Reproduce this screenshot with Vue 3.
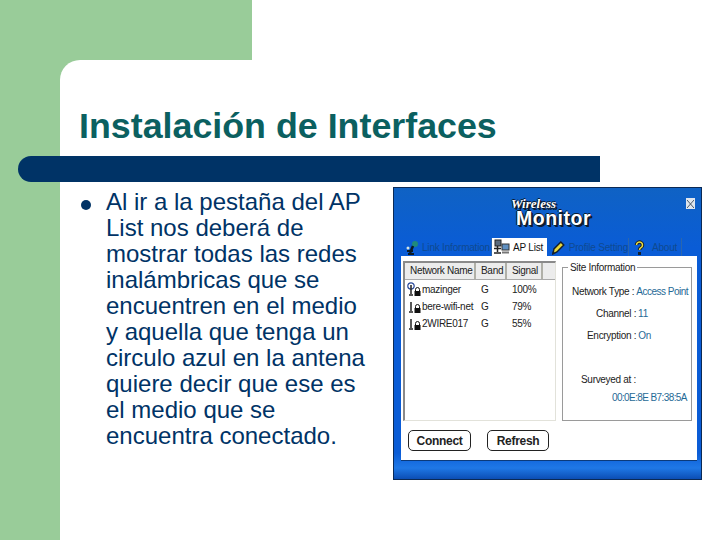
<script setup>
const lines = [
  'Al ir a la pestaña del AP',
  'List nos deberá de',
  'mostrar todas las redes',
  'inalámbricas que se',
  'encuentren en el medio',
  'y aquella que tenga un',
  'circulo azul en la antena',
  'quiere decir que ese es',
  'el medio que se',
  'encuentra conectado.'
]

const networks = [
  { name: 'mazinger', band: 'G', signal: '100%', connected: true },
  { name: 'bere-wifi-net', band: 'G', signal: '79%', connected: false },
  { name: '2WIRE017', band: 'G', signal: '55%', connected: false }
]
</script>

<template>
  <div class="slide">
    <div class="top-band"></div>
    <div class="main">
      <div class="content">
        <h1 class="title">Instalación de Interfaces</h1>
        <div class="rule"></div>
        <div class="body">
          <div class="bullet"></div>
          <p class="text">
            <span v-for="line in lines" :key="line" class="line">{{ line }}</span>
          </p>
          <div class="window">
            <div class="logo-row">
              <div class="logo">
                <span class="logo-small">Wireless</span>
                <span class="logo-big">Monitor</span>
              </div>
              <div class="close">
                <svg width="7" height="8" viewBox="0 0 7 8"><path d="M0 0l7 8M7 0L0 8" stroke="#4a5a6a" stroke-width="1" fill="none" /></svg>
              </div>
            </div>
            <div class="tabs">
              <div class="tab tab-link">
                <svg width="14" height="16" viewBox="0 0 14 16"><circle cx="10" cy="5" r="3" fill="#1f8a7c" /><path d="M8 7L5 14" stroke="#0c1a24" stroke-width="2.500" fill="none" /><path d="M2 12h6M3 15h6" stroke="#0c1a24" stroke-width="2" fill="none" /><circle cx="3" cy="9" r="1.500" fill="#d8e6e0" /></svg>
                <span>Link Information</span>
              </div>
              <div class="tab tab-active">
                <svg width="16" height="16" viewBox="0 0 16 16"><rect x="1" y="1" width="6" height="6" fill="#5a6a7c" stroke="#222" stroke-width="1" /><rect x="8" y="5" width="7" height="6" fill="#5f8fc0" stroke="#333" stroke-width="1" /><path d="M0 9.500h7M3.500 7v6M0 14h7" stroke="#222" stroke-width="1.500" fill="none" /><path d="M8 13.500h7" stroke="#777" stroke-width="2" /></svg>
                <span>AP List</span>
              </div>
              <div class="tab tab-profile">
                <svg width="15" height="16" viewBox="0 0 15 16"><path d="M2 15l1-5 7-7 3 3-7 7z" fill="#e8d83a" stroke="#15202c" stroke-width="1.500" /><path d="M1 15l3-1-2-2z" fill="#15202c" /></svg>
                <span>Profile Setting</span>
              </div>
              <div class="tab tab-about">
                <svg width="11" height="15" viewBox="0 0 11 15"><path d="M2.500 5a3 3 0 1 1 4.500 2.600C6 8.200 5.500 9 5.500 10" stroke="#15202c" stroke-width="3.500" fill="none" /><path d="M2.500 5a3 3 0 1 1 4.500 2.600C6 8.200 5.500 9 5.500 10" stroke="#ecdc40" stroke-width="1.500" fill="none" /><rect x="4" y="12" width="3" height="3" fill="#15202c" /></svg>
                <span>About</span>
              </div>
            </div>
            <div class="panel">
              <div class="columns">
                <div class="list">
                  <div class="list-head">
                    <span class="head-cell col-name">Network Name</span>
                    <span class="head-cell col-band">Band</span>
                    <span class="head-cell col-signal">Signal</span>
                  </div>
                  <div class="rows">
                    <div v-for="n in networks" :key="n.name" class="row">
                      <span class="col-name row-name">
                        <svg width="15" height="15" viewBox="0 0 15 15">
                          <circle v-if="n.connected" cx="4" cy="4" r="3.200" fill="none" stroke="#2a4a9c" stroke-width="1.200" />
                          <path d="M4 3v9" stroke="#222" stroke-width="1.500" fill="none" />
                          <path d="M2 13h4" stroke="#222" stroke-width="1.500" fill="none" />
                          <path d="M8.500 9V7.500a2 2 0 0 1 4 0V9" stroke="#111" stroke-width="1" fill="none" />
                          <rect x="7.500" y="9" width="6" height="5" fill="#111" />
                        </svg>
                        <span>{{ n.name }}</span>
                      </span>
                      <span class="col-band">{{ n.band }}</span>
                      <span class="col-signal">{{ n.signal }}</span>
                    </div>
                  </div>
                </div>
                <div class="info">
                  <span class="legend">Site Information</span>
                  <div class="info-row r1"><span>Network Type :</span><em>Access Point</em></div>
                  <div class="info-row r2"><span>Channel :</span><em>11</em></div>
                  <div class="info-row r3"><span>Encryption :</span><em>On</em></div>
                  <div class="info-row r4"><span>Surveyed at :</span></div>
                  <div class="info-row r5"><em>00:0E:8E B7:38:5A</em></div>
                </div>
              </div>
              <div class="buttons">
                <button class="btn">Connect</button>
                <button class="btn btn-refresh">Refresh</button>
              </div>
            </div>
          </div>
        </div>
      </div>
    </div>
  </div>
</template>

<style>
body {
  margin: 0;
}
</style>

<style scoped>
.slide {
  width: 720px;
  height: 540px;
  display: flex;
  flex-direction: column;
  background: #fff;
  overflow: hidden;
  font-family: "Liberation Sans", Arial, sans-serif;
}

.top-band {
  width: 252px;
  height: 60px;
  flex: none;
  background: #99cc99;
}

.main {
  flex: 1;
  background: #99cc99;
  padding-left: 60px;
  display: flex;
}

.content {
  flex: 1;
  background: #fff;
  border-top-left-radius: 20px;
  padding: 46px 0 0 19px;
  min-width: 0;
}

.title {
  margin: 0;
  font-size: 35.800px;
  line-height: 40px;
  font-weight: 700;
  color: #0b6060;
  white-space: nowrap;
}

.rule {
  width: 582px;
  height: 26px;
  margin: 10px 0 0 -61px;
  background: #003366;
  border-radius: 13px 0 0 13px;
}

.body {
  display: flex;
  align-items: flex-start;
  margin-top: 5px;
}

.bullet {
  width: 10px;
  height: 10px;
  margin-top: 13px;
  border-radius: 50%;
  background: #003366;
  flex: none;
  margin-left: 2px;
}

.text {
  margin: 2px 0 0 15px;
  width: 287px;
  flex: none;
  font-size: 24px;
  line-height: 26px;
  color: #003366;
}

.line {
  display: block;
  white-space: nowrap;
}

.window {
  width: 309px;
  height: 293px;
  box-sizing: border-box;
  flex: none;
  border: 1px solid #0b2a55;
  background: linear-gradient(#0f62c4 0, #0a5cd6 60px, #0a5cd6 265px, #1f78e6 280px, #0a4ab0 292px);
  display: flex;
  flex-direction: column;
  padding: 0 4px 0 7px;
}

.logo-row {
  height: 50px;
  display: flex;
  justify-content: center;
  position: relative;
}

.logo {
  display: flex;
  flex-direction: column;
  margin-left: 9px;
  padding-top: 10px;
  color: #fff;
  text-shadow: 1px 1px 0 #0c1c30, 2px 2px 0 #0c1c30, -1px 0 0 #0c1c30, 0 -1px 0 #0c1c30;
}

.logo-small {
  font-family: "Liberation Serif", serif;
  font-style: italic;
  font-weight: 700;
  font-size: 13px;
  line-height: 11px;
  margin-left: -5px;
}

.logo-big {
  font-size: 19.500px;
  line-height: 18px;
  font-weight: 700;
  letter-spacing: 0.5px;
}

.close {
  position: absolute;
  right: 2px;
  top: 10px;
  width: 9px;
  height: 11px;
  background: #dfe6ee;
  display: flex;
  align-items: center;
  justify-content: center;
}

.tabs {
  height: 18px;
  display: flex;
  align-items: flex-end;
  font-size: 10px;
  letter-spacing: -0.2px;
  color: #0f4a90;
}

.tab {
  height: 18px;
  display: flex;
  align-items: center;
  gap: 4px;
  white-space: nowrap;
  box-sizing: border-box;
  border-right: 1px solid #2a66ae;
}

.tab-link {
  width: 91px;
  padding-left: 4px;
  gap: 3px;
}

.tab-active {
  width: 55px;
  background: #fff;
  color: #111;
  padding-left: 2px;
  border-right: 0;
  gap: 3px;
}

.tab-profile {
  width: 82px;
  padding-left: 4px;
  gap: 3px;
}

.tab-about {
  width: 53px;
  padding-left: 5px;
  gap: 7px;
}

.panel {
  height: 205px;
  background: #fff;
  flex: none;
  padding: 5px 5px 0 2px;
  box-sizing: border-box;
  border-bottom: 1px solid #0b3a7a;
}

.columns {
  display: flex;
  gap: 6px;
  height: 160px;
  font-size: 10px;
  letter-spacing: -0.3px;
  color: #222;
}

.list {
  width: 153px;
  flex: none;
  box-sizing: border-box;
  border: 1px solid #e2e2da;
  border-left: 2px solid #8a8a8a;
  border-top: 2px solid #8a8a8a;
}

.list-head {
  display: flex;
  height: 16px;
  background: #ececec;
  border-bottom: 1px solid #aaa;
}

.head-cell {
  box-sizing: border-box;
  border-right: 2px solid #b0b0a8;
  line-height: 16px;
  padding-left: 5px;
  white-space: nowrap;
}

.col-name {
  width: 71px;
  flex: none;
}

.col-band {
  width: 31px;
  flex: none;
  padding-left: 5px;
  box-sizing: border-box;
}

.col-signal {
  width: 36px;
  flex: none;
  box-sizing: border-box;
  padding-left: 5px;
}

.rows {
  padding-top: 1px;
}

.row {
  display: flex;
  height: 17px;
  align-items: center;
}

.row-name {
  display: flex;
  align-items: center;
  white-space: nowrap;
  padding-left: 2px;
  box-sizing: border-box;
}

.info {
  position: relative;
  flex: 1;
  min-width: 0;
  margin-top: 6px;
  border: 1px solid #9a9a9a;
  box-sizing: border-box;
}

.legend {
  position: absolute;
  top: -7px;
  left: 5px;
  padding: 0 2px;
  background: #fff;
  line-height: 13px;
}

.info-row {
  white-space: nowrap;
  line-height: 13px;
}

.info-row em {
  font-style: normal;
  color: #1f6a96;
  margin-left: 2px;
}

.r1 {
  margin: 17px 0 0 9px;
}

.r1 em {
  letter-spacing: -0.5px;
}

.r2 {
  margin: 9px 0 0 33px;
}

.r3 {
  margin: 9px 0 0 24px;
}

.r4 {
  margin: 31px 0 0 18px;
}

.r5 {
  margin: 5px 0 0 47px;
  letter-spacing: -0.6px;
}

.buttons {
  display: flex;
  gap: 16px;
  padding: 9px 0 0 5px;
}

.btn {
  width: 63px;
  height: 21px;
  padding: 0;
  background: #fff;
  border: 1px solid #222;
  border-radius: 5px;
  font-family: "Liberation Sans", Arial, sans-serif;
  font-size: 12px;
  letter-spacing: -0.3px;
  font-weight: 700;
  color: #222;
}

.btn-refresh {
  width: 62px;
}
</style>
